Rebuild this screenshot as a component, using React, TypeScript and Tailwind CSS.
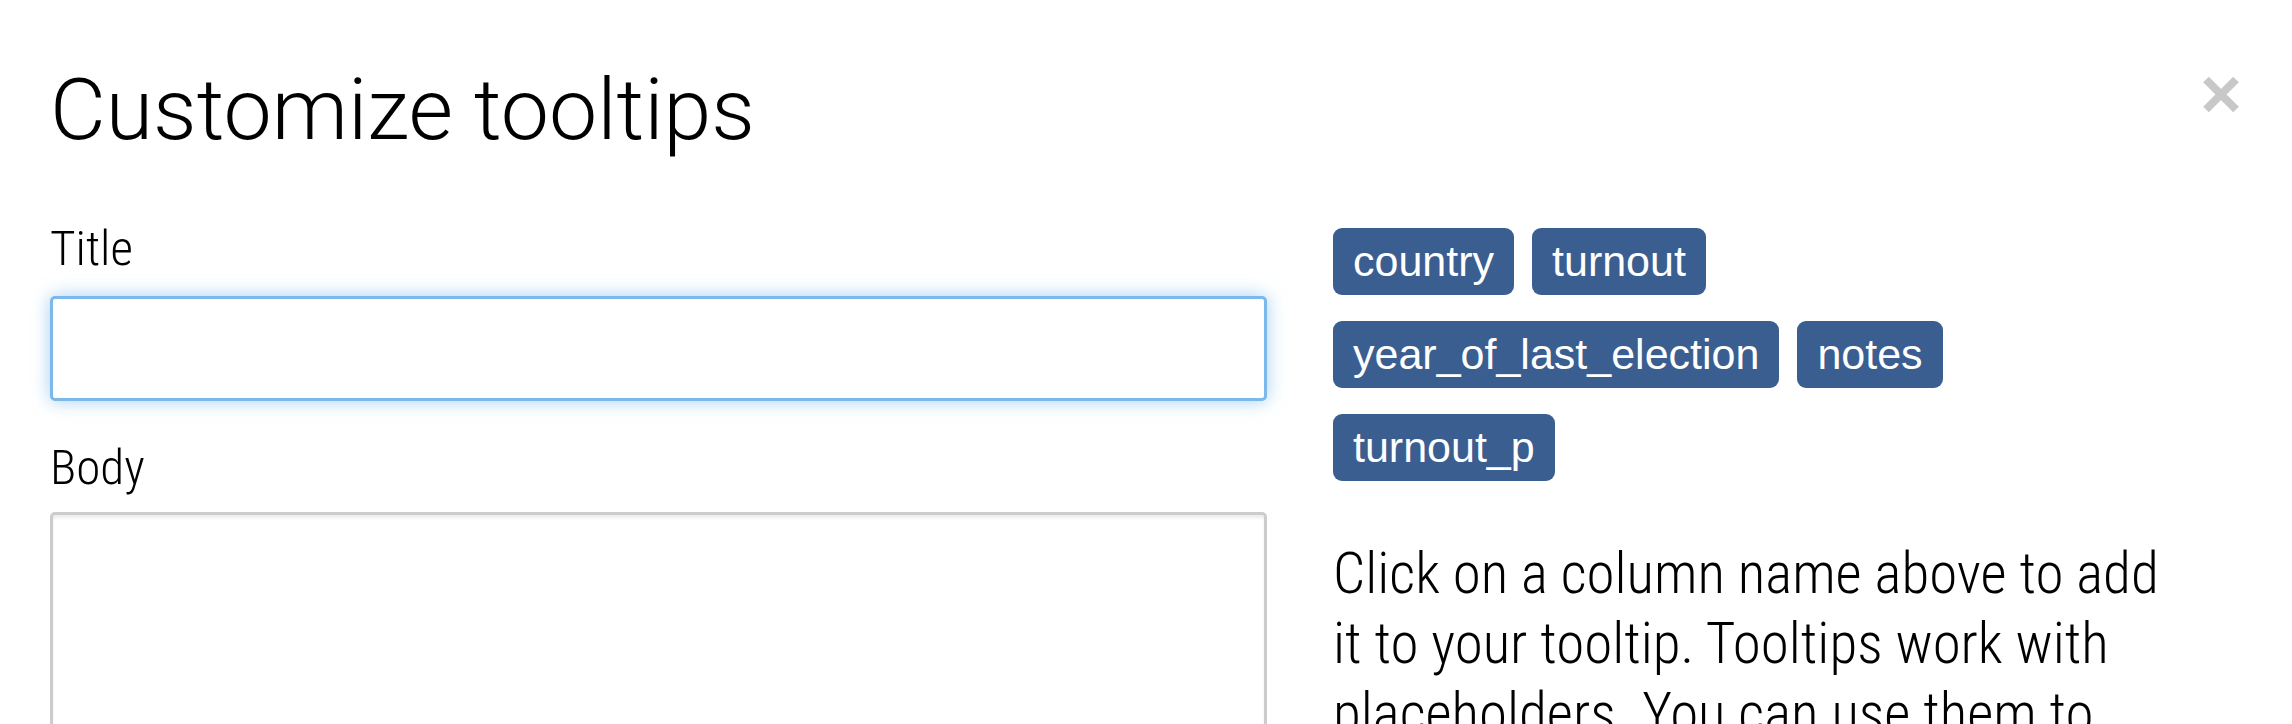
import React from "react";

const columns = [
  ["country", "turnout"],
  ["year_of_last_election", "notes"],
  ["turnout_p"],
];

export default function App() {
  return (
    <div className="relative h-[724px] w-[2292px] overflow-hidden bg-white text-black [font-family:Roboto,'Noto_Sans',sans-serif]">
      <div className="flex items-start justify-between pl-[50px] pr-[53px] pt-[63px]">
        <h1 className="text-[86px] font-light leading-[1.1] tracking-[0px]">Customize tooltips</h1>
        <button className="mt-[13px] text-[#c8c8c8]" aria-label="Close">
          <svg width="36" height="37" viewBox="0 0 36 37">
            <path d="M3 3.5 L33 33.5 M33 3.5 L3 33.5" stroke="currentColor" strokeWidth="8" />
          </svg>
        </button>
      </div>

      <div className="mt-[62px] flex pl-[50px]">
        <div className="w-[1217px] shrink-0">
          <label className="block text-[49px] font-light font-stretch-condensed leading-[1.2]">Title</label>
          <div className="mt-[18px] h-[105px] rounded-[5px] border-[3px] border-[#7db8ea] bg-white shadow-[0_0_18px_rgba(102,175,233,0.6)]" />
          <label className="mt-[38px] block text-[49px] font-light font-stretch-condensed leading-[1.2]">Body</label>
          <div className="mt-[14px] h-[300px] rounded-[5px] border-[3px] border-[#cccccc] bg-white shadow-[inset_0_3px_3px_rgba(0,0,0,0.075)]" />
        </div>

        <div className="ml-[66px] w-[850px]">
          <div className="mt-[8px] flex flex-col gap-[26px]">
            {columns.map((row, i) => (
              <div key={i} className="flex gap-[18px]">
                {row.map((c) => (
                  <span
                    key={c}
                    className="flex h-[67px] items-center rounded-[9px] bg-[#3b5e91] px-[20px] text-[43px] text-white [font-family:'Liberation_Sans',Arial,sans-serif]"
                  >
                    {c}
                  </span>
                ))}
              </div>
            ))}
          </div>
          <p className="mt-[58px] text-[57px] font-light font-stretch-condensed leading-[70px]">
            Click on a column name above to add it to your tooltip. Tooltips work with placeholders. You can use them to
            show the values of your data in the tooltip.
          </p>
        </div>
      </div>
    </div>
  );
}
